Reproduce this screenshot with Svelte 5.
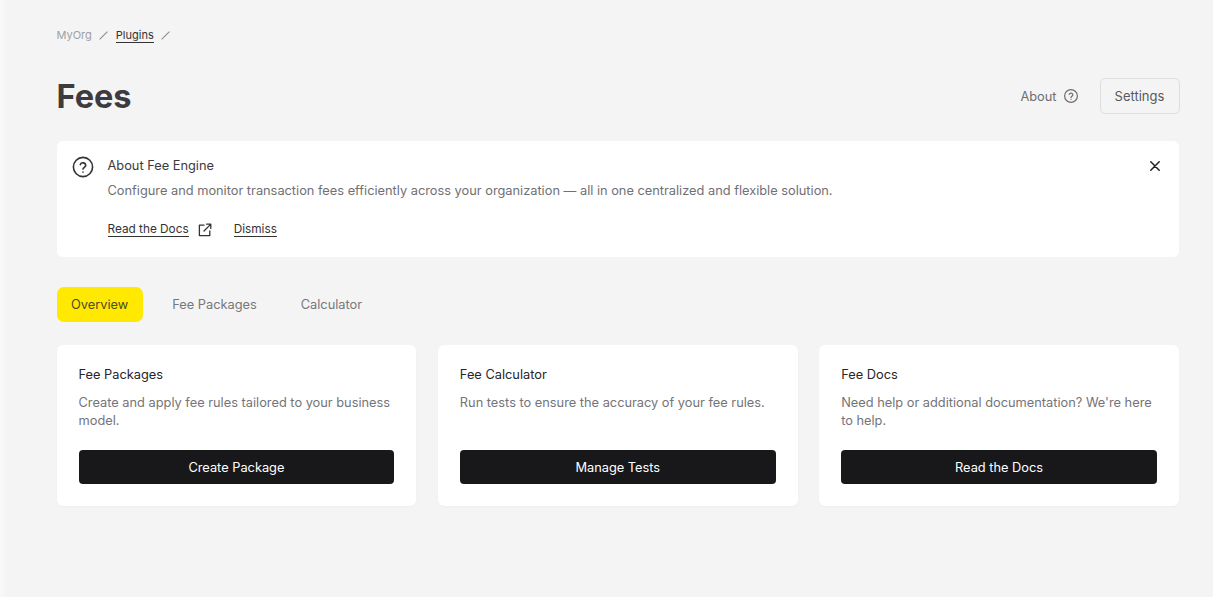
<script>
  const tabs = ["Overview", "Fee Packages", "Calculator"];
  let activeTab = $state("Overview");
  let showBanner = $state(true);

  const cards = [
    {
      title: "Fee Packages",
      text: "Create and apply fee rules tailored to your business model.",
      action: "Create Package"
    },
    {
      title: "Fee Calculator",
      text: "Run tests to ensure the accuracy of your fee rules.",
      action: "Manage Tests"
    },
    {
      title: "Fee Docs",
      text: "Need help or additional documentation? We're here to help.",
      action: "Read the Docs"
    }
  ];
</script>

<main class="page">
  <nav class="breadcrumb">
    <span class="crumb-root">MyOrg</span>
    <span class="slash"></span>
    <a class="crumb-link" href="#plugins">Plugins</a>
    <span class="slash"></span>
  </nav>

  <header class="page-head">
    <h1>Fees</h1>
    <div class="head-actions">
      <span class="about">
        About
        <svg width="16" height="16" viewBox="0 0 16 16" fill="none" stroke="currentColor" stroke-width="1.2" stroke-linecap="round">
          <circle cx="8" cy="8" r="6.4" />
          <path d="M6.2 6.4a1.85 1.85 0 0 1 3.6.5c0 1.2-1.8 1.4-1.8 2.5" />
          <path d="M8 11.2v.1" />
        </svg>
      </span>
      <button class="settings">Settings</button>
    </div>
  </header>

  {#if showBanner}
    <section class="banner">
      <svg class="banner-icon" width="22" height="22" viewBox="0 0 22 22" fill="none" stroke="currentColor" stroke-width="1.6" stroke-linecap="round">
        <circle cx="11" cy="11" r="9.6" />
        <path d="M8.3 8.6a2.8 2.8 0 0 1 5.4.8c0 1.8-2.7 2-2.7 3.7" />
        <path d="M11 16v.1" />
      </svg>
      <div class="banner-body">
        <h2>About Fee Engine</h2>
        <p>Configure and monitor transaction fees efficiently across your organization — all in one centralized and flexible solution.</p>
        <div class="banner-links">
          <a href="#docs">Read the Docs</a>
          <svg class="ext" width="14" height="14" viewBox="0 0 14 14" fill="none" stroke="currentColor" stroke-width="1.3" stroke-linecap="round" stroke-linejoin="round">
            <path d="M6 2.2H1.4v10.4h10.4V8" />
            <path d="M6 8 12.6 1.4M8.6 1.2h4.2v4.2" />
          </svg>
          <a class="dismiss" href="#dismiss" onclick={(e) => { e.preventDefault(); showBanner = false; }}>Dismiss</a>
        </div>
      </div>
      <button class="close" aria-label="Close" onclick={() => (showBanner = false)}>
        <svg width="10" height="10" viewBox="0 0 10 10" stroke="currentColor" stroke-width="1.5" stroke-linecap="round">
          <path d="M.8.8l8.4 8.4M9.2.8.8 9.2" />
        </svg>
      </button>
    </section>
  {/if}

  <div class="tabs">
    {#each tabs as tab}
      <button class="tab" class:active={activeTab === tab} onclick={() => (activeTab = tab)}>{tab}</button>
    {/each}
  </div>

  <div class="cards">
    {#each cards as card}
      <article class="card">
        <h3>{card.title}</h3>
        <p>{card.text}</p>
        <button class="primary">{card.action}</button>
      </article>
    {/each}
  </div>
</main>

<style>
  :global(body) {
    background: linear-gradient(to right, #f9f9f9, #f4f4f4 8px);
    font-family: Inter, "Liberation Sans", sans-serif;
  }

  .page {
    padding: 28px 34px 0 56.5px;
    height: 597px;
    box-sizing: border-box;
    overflow: hidden;
  }

  .breadcrumb {
    display: flex;
    align-items: center;
    height: 14px;
    font-size: 11px;
  }

  .crumb-root {
    color: #a0a0a4;
  }

  .crumb-link {
    color: #333;
    text-decoration: none;
    border-bottom: 1px solid #333;
  }

  .slash {
    width: 11px;
    height: 1px;
    background: #8a8a8a;
    transform: rotate(-45deg);
    margin: 0 6.5px;
  }

  .page-head {
    display: flex;
    align-items: center;
    justify-content: space-between;
    margin-top: 36px;
    height: 36px;
  }

  h1 {
    margin: 0;
    font-size: 32.5px;
    font-weight: 700;
    color: #3c3c40;
  }

  .head-actions {
    display: flex;
    align-items: center;
    gap: 21px;
  }

  .about {
    display: flex;
    align-items: center;
    gap: 6px;
    font-size: 12.8px;
    color: #6e6e72;
  }

  .settings {
    width: 80px;
    height: 36px;
    margin-right: -0.5px;
    background: #f4f4f4;
    border: 1px solid #dedede;
    border-radius: 5px;
    font: inherit;
    font-size: 13px;
    color: #58585c;
  }

  .banner {
    display: flex;
    gap: 14px;
    margin-top: 27px;
    height: 116px;
    box-sizing: border-box;
    padding: 16px 15px 0 15px;
    background: #fff;
    border-radius: 6px;
  }

  .banner-icon {
    flex: none;
    margin-top: -1px;
    color: #333;
  }

  .banner-body {
    flex: 1;
  }

  h2 {
    margin: 0;
    font-size: 12.8px;
    line-height: 18px;
    font-weight: 400;
    color: #3a3a3c;
  }

  .banner p {
    margin: 7px 0 0;
    font-size: 12.8px;
    line-height: 18px;
    color: #707074;
  }

  .banner-links {
    display: flex;
    align-items: center;
    margin-top: 22px;
    font-size: 11.8px;
  }

  .banner-links a {
    color: #333;
    text-decoration: none;
    border-bottom: 1px solid #333;
    line-height: 14px;
  }

  .ext {
    margin-left: 9px;
    color: #333;
  }

  .banner-links .dismiss {
    margin-left: 22px;
  }

  .close {
    width: 20px;
    height: 20px;
    margin-top: -1px;
    padding: 0;
    margin-right: -1px;
    border: none;
    background: none;
    color: #222;
    display: flex;
    align-items: center;
    justify-content: center;
  }

  .tabs {
    display: flex;
    gap: 15px;
    margin-top: 30px;
  }

  .tab {
    height: 35px;
    padding: 0 14.5px;
    border: none;
    border-radius: 7px;
    background: none;
    font: inherit;
    font-size: 12.8px;
    color: #77777b;
  }

  .tab.active {
    background: #ffe900;
    color: #4a4a2e;
  }

  .cards {
    display: grid;
    grid-template-columns: repeat(3, 1fr);
    gap: 21.5px;
    margin-top: 23px;
  }

  .card {
    display: flex;
    flex-direction: column;
    height: 161px;
    box-sizing: border-box;
    padding: 21px 22px 0;
    background: #fff;
    border-radius: 6px;
    box-shadow: 0 1px 2px rgba(0, 0, 0, 0.03);
  }

  h3 {
    margin: 0;
    font-size: 12.8px;
    line-height: 18px;
    font-weight: 400;
    color: #262628;
  }

  .card p {
    margin: 10px 0 0;
    height: 36px;
    font-size: 12.8px;
    line-height: 18px;
    color: #747478;
  }

  .primary {
    margin-top: 20px;
    height: 34px;
    border: none;
    border-radius: 4px;
    background: #18181a;
    color: #fff;
    font: inherit;
    font-size: 12.8px;
  }
</style>
